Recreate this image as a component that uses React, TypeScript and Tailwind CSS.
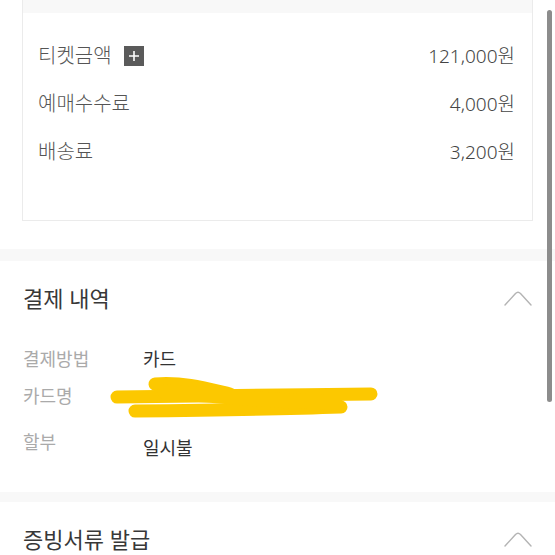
import React from "react";

const font = { fontFamily: '"Noto Sans", "Noto Sans CJK KR", sans-serif' };

function Chevron() {
  return (
    <svg width="28" height="16" viewBox="0 0 28 16" fill="none">
      <path d="M1 15 L11.5 3.5 Q14 1 16.5 3.5 L27 15" stroke="#b4b4b4" strokeWidth="1.4" strokeLinecap="round" strokeLinejoin="round" />
    </svg>
  );
}

function PlusBox() {
  return (
    <span className="inline-flex h-[20px] w-[20px] items-center justify-center bg-[#5a5a5a]">
      <svg width="12" height="12" viewBox="0 0 12 12">
        <path d="M6 1 V11 M1 6 H11" stroke="#ffffff" strokeWidth="1.6" />
      </svg>
    </span>
  );
}

function FeeRow({ label, value, plus }: { label: string; value: string; plus?: boolean }) {
  return (
    <div className="flex h-[48px] items-center justify-between leading-none text-[#555]">
      <div className="flex items-center gap-[12px]">
        <span className="text-[20px] font-light">{label}</span>
        {plus && <PlusBox />}
      </div>
      <span className="text-[19px] font-light text-[#444]">{value}</span>
    </div>
  );
}

function Scribble() {
  return (
    <svg width="280" height="50" viewBox="0 0 280 50" className="absolute left-[105px] top-[372px]">
      <g stroke="#fcc800" strokeWidth="13" strokeLinecap="round" fill="none">
        <path d="M50 12 C 80 10, 100 16, 125 22" />
        <path d="M12 25 C 90 24, 180 23, 266 22" />
        <path d="M30 39 C 120 38, 180 37, 236 35" />
        <path d="M60 20 C 100 22, 160 30, 230 30" strokeWidth="15" />
      </g>
    </svg>
  );
}

export default function App() {
  return (
    <div className="relative h-[555px] w-[555px] overflow-hidden bg-white" style={font}>
      <div className="px-[22px]">
        <div className="border border-t-0 border-[#ebebeb]">
          <div className="h-[13px] bg-[#f8f8f8]" />
          <div className="pl-[15px] pr-[17px] pt-[19px] pb-[44px]">
            <FeeRow label="티켓금액" value="121,000원" plus />
            <FeeRow label="예매수수료" value="4,000원" />
            <FeeRow label="배송료" value="3,200원" />
          </div>
        </div>
      </div>
      <div className="mt-[28px] h-[12px] bg-[#f8f8f8]" />
      <div className="px-[23px] pt-[22px] pb-[35px]">
        <div className="flex h-[30px] items-center justify-between">
          <span className="text-[22px] leading-none text-[#383838]">결제 내역</span>
          <Chevron />
        </div>
        <div className="mt-[34px] text-[18px] leading-none">
          <div className="flex h-[24px] items-center">
            <span className="w-[120px] text-[#aaaaaa]">결제방법</span>
            <span className="text-[#333]">카드</span>
          </div>
          <div className="mt-[13px] flex h-[24px] items-center">
            <span className="w-[120px] text-[#aaaaaa]">카드명</span>
          </div>
          <div className="mt-[25px] flex h-[24px] items-start">
            <span className="w-[120px] text-[#aaaaaa]">할부</span>
            <span className="mt-[6px] text-[#333]">일시불</span>
          </div>
        </div>
      </div>
      <div className="h-[10px] bg-[#f8f8f8]" />
      <div className="px-[23px] pt-[22px]">
        <div className="flex h-[30px] items-center justify-between">
          <span className="text-[22px] leading-none text-[#383838]">증빙서류 발급</span>
          <Chevron />
        </div>
      </div>
      <Scribble />
      <div className="absolute left-[547px] top-[10px] h-[392px] w-[5px] rounded-full bg-[#8c8c8c]" />
    </div>
  );
}
